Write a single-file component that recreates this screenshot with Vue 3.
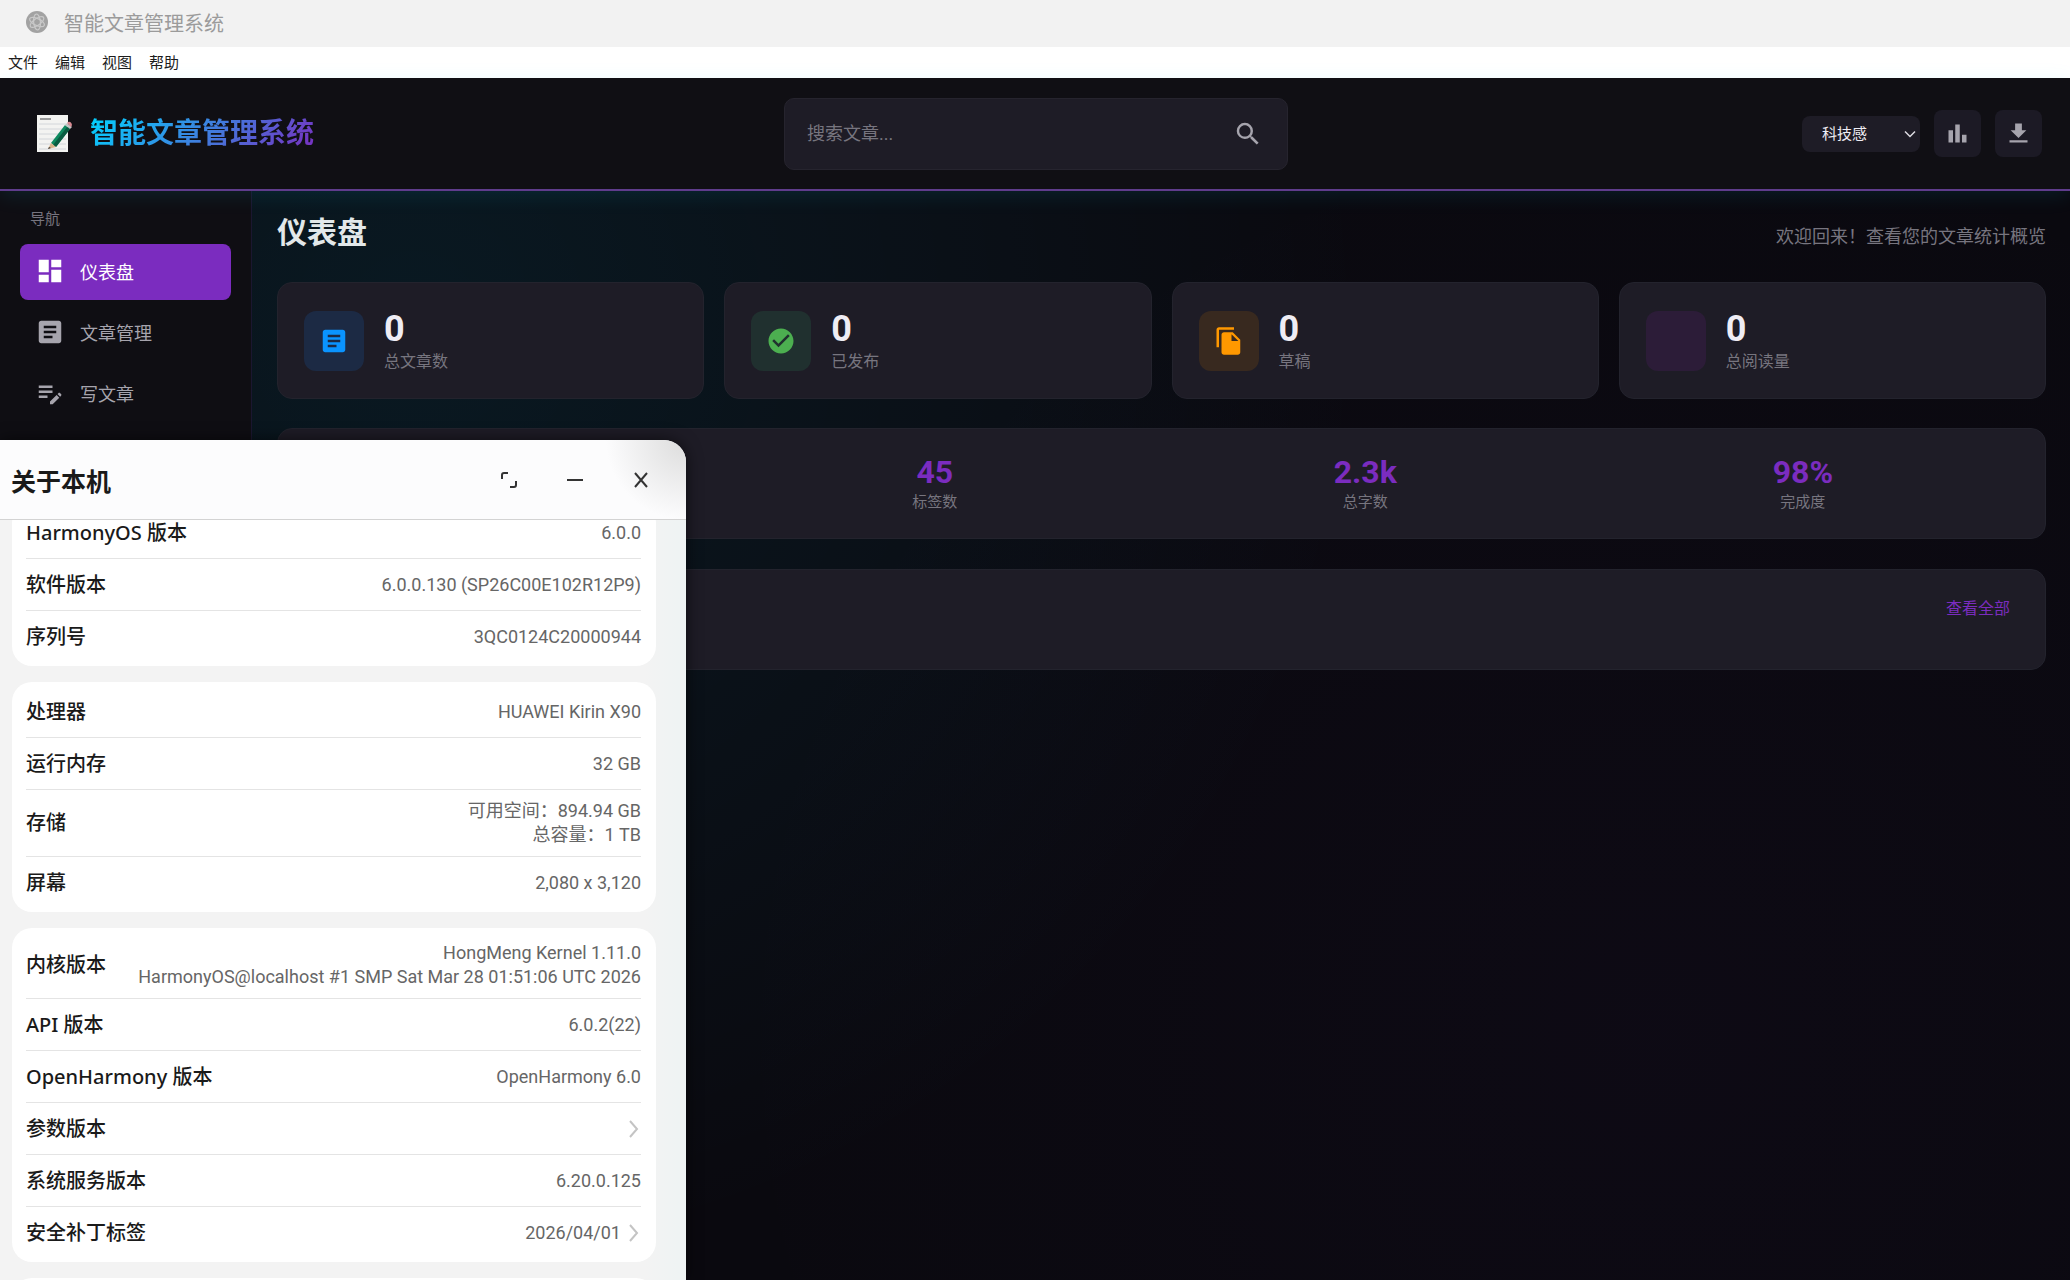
<script setup>
import { ref } from 'vue'

const query = ref('')
const theme = ref('科技感')

const menus = ['文件', '编辑', '视图', '帮助']

const navItems = [
  { label: '仪表盘', icon: 'M3 13h8V3H3v10zm0 8h8v-6H3v6zm10 0h8V11h-8v10zm0-18v6h8V3h-8z', active: true },
  { label: '文章管理', icon: 'M19 3H5c-1.1 0-2 .9-2 2v14c0 1.1.9 2 2 2h14c1.1 0 2-.9 2-2V5c0-1.1-.9-2-2-2zm-5 14H7v-2h7v2zm3-4H7v-2h10v2zm0-4H7V7h10v2z' },
  { label: '写文章', icon: 'M3 10h11v2H3v-2zm0-4h11v2H3V6zm0 8h7v2H3v-2zm15.010-1.130.71-.71c.39-.39 1.020-.39 1.410 0l.71.71c.39.39.39 1.020 0 1.410l-.71.71-2.120-2.120zm-.71.71-5.300 5.300V21h2.120l5.300-5.300-2.120-2.120z' },
]

const cards = [
  { label: '总文章数', tone: 'blue', icon: 'M19 3H5c-1.1 0-2 .9-2 2v14c0 1.1.9 2 2 2h14c1.1 0 2-.9 2-2V5c0-1.1-.9-2-2-2zm-5 14H7v-2h7v2zm3-4H7v-2h10v2zm0-4H7V7h10v2z' },
  { label: '已发布', tone: 'green', icon: 'M12 2C6.48 2 2 6.48 2 12s4.48 10 10 10 10-4.48 10-10S17.52 2 12 2zm-2 15-5-5 1.41-1.41L10 14.17l7.59-7.59L19 8l-9 9z' },
  { label: '草稿', tone: 'orange', icon: 'M16 1H4c-1.1 0-2 .9-2 2v14h2V3h12V1zm-1 4 6 6v10c0 1.1-.9 2-2 2H7.99C6.89 23 6 22.1 6 21l.01-14c0-1.1.89-2 1.99-2h7zm-1 7h5.5L14 6.5V12z' },
  { label: '总阅读量', tone: 'purple', icon: '' },
]

const quickStats = [
  { value: '45', label: '标签数' },
  { value: '2.3k', label: '总字数' },
  { value: '98%', label: '完成度' },
]

const groups = [
  [
    { label: 'HarmonyOS 版本', lines: ['6.0.0'] },
    { label: '软件版本', lines: ['6.0.0.130 (SP26C00E102R12P9)'] },
    { label: '序列号', lines: ['3QC0124C20000944'] },
  ],
  [
    { label: '处理器', lines: ['HUAWEI Kirin X90'] },
    { label: '运行内存', lines: ['32 GB'] },
    { label: '存储', lines: ['可用空间：894.94 GB', '总容量：1 TB'] },
    { label: '屏幕', lines: ['2,080 x 3,120'] },
  ],
  [
    { label: '内核版本', lines: ['HongMeng Kernel 1.11.0', 'HarmonyOS@localhost #1 SMP Sat Mar 28 01:51:06 UTC 2026'] },
    { label: 'API 版本', lines: ['6.0.2(22)'] },
    { label: 'OpenHarmony 版本', lines: ['OpenHarmony 6.0'] },
    { label: '参数版本', lines: [], more: true },
    { label: '系统服务版本', lines: ['6.20.0.125'] },
    { label: '安全补丁标签', lines: ['2026/04/01'], more: true },
  ],
  [],
]
</script>

<template>
  <div class="screen">
    <div class="titlebar">
      <svg class="app-mark" viewBox="0 0 24 24" aria-hidden="true">
        <circle cx="12" cy="12" r="11" fill="#a2a2a2" />
        <g fill="none" stroke="#c9c9c9" stroke-width="1.2">
          <ellipse cx="12" cy="12" rx="8" ry="3.4" transform="rotate(25 12 12)" />
          <ellipse cx="12" cy="12" rx="8" ry="3.4" transform="rotate(85 12 12)" />
          <ellipse cx="12" cy="12" rx="8" ry="3.4" transform="rotate(145 12 12)" />
        </g>
      </svg>
      <span>智能文章管理系统</span>
    </div>

    <nav class="menubar" aria-label="菜单">
      <button v-for="m in menus" :key="m" type="button">{{ m }}</button>
    </nav>

    <div class="app">
      <header class="header">
        <div class="brand">
          <svg class="brand-icon" viewBox="0 0 36 40" aria-hidden="true">
            <rect x="1" y="1" width="31" height="37" fill="#f3f3f1" />
            <path d="M4 5h11" stroke="#9a9a9a" stroke-width="2" />
            <path d="M3 10h27M3 15h27M3 20h27M3 25h27M3 30h27M3 35h27" stroke="#d3d6da" stroke-width="1" />
            <path d="M15 29 29 11l5 4-14 18z" fill="#0f8a5f" />
            <path d="M17 31 31 13l3 2-14 18z" fill="#0a5c41" />
            <path d="m29 11 2-2 5 4-2 2z" fill="#c4c4c4" />
            <path d="m31 9 1-1q3-1 4 3l-1 2z" fill="#d98a92" />
            <path d="m15 29-3 6 8-2z" fill="#d9b48a" />
            <path d="m13 33-1 2 3-1z" fill="#333" />
          </svg>
          <h1>智能文章管理系统</h1>
        </div>

        <form class="search" role="search" @submit.prevent>
          <input v-model="query" type="text" placeholder="搜索文章..." aria-label="搜索文章" />
          <button type="submit" aria-label="搜索">
            <svg viewBox="0 0 24 24"><path d="M15.5 14h-.79l-.28-.27A6.47 6.47 0 0 0 16 9.5 6.5 6.5 0 1 0 9.5 16c1.61 0 3.09-.59 4.23-1.57l.27.28v.79l5 4.99L20.49 19l-4.99-5zm-6 0C7.01 14 5 11.99 5 9.5S7.01 5 9.5 5 14 7.01 14 9.5 11.99 14 9.5 14z" /></svg>
          </button>
        </form>

        <div class="actions">
          <div class="theme">
            <select v-model="theme" aria-label="主题">
              <option>科技感</option>
            </select>
            <svg viewBox="0 0 12 8" aria-hidden="true"><path d="m1 1.500 5 5 5-5" /></svg>
          </div>
          <button class="icon-btn" type="button" aria-label="统计">
            <svg viewBox="0 0 24 24"><path d="M4 9h4v11H4V9zm6-5h4v16h-4V4zm6 9h4v7h-4v-7z" /></svg>
          </button>
          <button class="icon-btn" type="button" aria-label="下载">
            <svg viewBox="0 0 24 24"><path d="M19 9h-4V3H9v6H5l7 7 7-7zM4 18v2h16v-2H4z" /></svg>
          </button>
        </div>
      </header>

      <div class="columns">
        <aside class="sidebar">
          <h2>导航</h2>
          <nav>
            <a v-for="n in navItems" :key="n.label" href="#" :class="{ active: n.active }">
              <svg viewBox="0 0 24 24" aria-hidden="true"><path :d="n.icon" /></svg>
              <span>{{ n.label }}</span>
            </a>
          </nav>
        </aside>

        <main class="main">
          <div class="page-head">
            <h2>仪表盘</h2>
            <p>欢迎回来！查看您的文章统计概览</p>
          </div>

          <section class="cards">
            <article v-for="c in cards" :key="c.label" class="card">
              <div class="card-icon" :class="c.tone">
                <svg v-if="c.icon" viewBox="0 0 24 24" aria-hidden="true"><path :d="c.icon" /></svg>
              </div>
              <div class="card-text">
                <strong>0</strong>
                <span>{{ c.label }}</span>
              </div>
            </article>
          </section>

          <section class="quick">
            <div class="quick-item"></div>
            <div v-for="q in quickStats" :key="q.label" class="quick-item">
              <strong>{{ q.value }}</strong>
              <span>{{ q.label }}</span>
            </div>
          </section>

          <section class="recent">
            <a href="#">查看全部</a>
          </section>
        </main>
      </div>
    </div>

    <section class="about" aria-label="关于本机">
      <header class="about-head">
        <h2>关于本机</h2>
        <div class="window-buttons">
          <button type="button" aria-label="最大化">
            <svg viewBox="0 0 20 20"><path d="M3 9V5q0-2 2-2h4M11 17h4q2 0 2-2v-4" /></svg>
          </button>
          <button type="button" aria-label="最小化">
            <svg viewBox="0 0 20 20"><path d="M2 10h16" /></svg>
          </button>
          <button type="button" aria-label="关闭">
            <svg viewBox="0 0 20 20"><path d="m4 3 12 14M16 3 4 17" /></svg>
          </button>
        </div>
      </header>
      <div class="about-body">
        <dl v-for="(g, i) in groups" :key="i" class="group">
          <div v-for="r in g" :key="r.label" class="row">
            <dt>{{ r.label }}</dt>
            <dd>
              <span class="lines">
                <span v-for="l in r.lines" :key="l">{{ l }}</span>
              </span>
              <svg v-if="r.more" viewBox="0 0 10 20" aria-hidden="true"><path d="m1 2 7 8-7 8" /></svg>
            </dd>
          </div>
        </dl>
      </div>
    </section>
  </div>
</template>

<style>
body {
  background: #0a090f;
}
</style>

<style scoped>
.screen {
  position: relative;
  display: flex;
  flex-direction: column;
  min-height: 100vh;
  overflow: hidden;
  font-family: Roboto, "Noto Sans CJK SC", sans-serif;
}
.screen *,
.screen {
  box-sizing: border-box;
}
h1, h2, p, dl, dd {
  margin: 0;
}
button, input, select {
  font: inherit;
  color: inherit;
  border: 0;
  padding: 0;
  background: none;
}
a {
  text-decoration: none;
}

.titlebar {
  display: flex;
  align-items: center;
  gap: 15px;
  height: 47px;
  padding: 0 25px 3px;
  background: #f2f2f2;
  color: #9b9b9b;
  font-size: 20px;
}
.app-mark {
  width: 24px;
  height: 24px;
}
.menubar {
  display: flex;
  gap: 17px;
  height: 31px;
  padding: 0 8px 2px;
  background: #fff;
  color: #1c1c1c;
  font-size: 15px;
}

.app {
  flex: 1;
  display: flex;
  flex-direction: column;
  background:
    radial-gradient(circle at 20% 20%, rgba(0, 212, 255, 0.08), transparent 50%),
    radial-gradient(circle at 80% 80%, rgba(123, 44, 191, 0.03), transparent 50%),
    #0a090f;
}
.header {
  position: relative;
  display: grid;
  grid-template-columns: 1fr 504px 1fr;
  align-items: center;
  height: 113px;
  padding: 0 28px 0 30px;
  background: #100f14;
  border-bottom: 2px solid #5f3c8c;
  box-shadow: 0 4px 20px rgba(0, 212, 255, 0.1);
}
.brand {
  display: flex;
  align-items: center;
  gap: 18px;
  padding-left: 6px;
}
.brand-icon {
  width: 36px;
  height: 40px;
}
.brand h1 {
  font-size: 28px;
  line-height: 40px;
  color: transparent;
  background: linear-gradient(135deg, #00d4ff, #7b2cbf);
  background-clip: text;
}
.search {
  display: flex;
  align-items: center;
  height: 72px;
  padding: 0 22px;
  background: #1e1c26;
  border: 1px solid #26242e;
  border-radius: 10px;
}
.search input {
  flex: 1;
  min-width: 0;
  height: 40px;
  font-size: 18px;
  outline: none;
  color: #e6e4ec;
}
.search input::placeholder {
  color: #77757f;
}
.search button {
  width: 32px;
  height: 36px;
}
.search svg {
  display: block;
  width: 30px;
  height: 30px;
  fill: #a6a4ad;
}
.actions {
  display: flex;
  align-items: center;
  justify-content: flex-end;
  gap: 14px;
}
.theme {
  position: relative;
}
.theme select {
  width: 118px;
  height: 36px;
  padding: 0 20px;
  appearance: none;
  background: #1e1c26;
  border-radius: 8px;
  color: #efedf4;
  font-size: 15px;
}
.theme svg {
  position: absolute;
  right: 4px;
  top: 14px;
  width: 12px;
  height: 8px;
  fill: none;
  stroke: #dcdae0;
  stroke-width: 1.5;
  pointer-events: none;
}
.icon-btn {
  display: grid;
  place-items: center;
  width: 47px;
  height: 47px;
  background: #1c1a25;
  border-radius: 8px;
}
.icon-btn svg {
  width: 27px;
  height: 27px;
  fill: #a6a4ad;
}

.columns {
  flex: 1;
  display: flex;
}
.sidebar {
  width: 252px;
  padding: 16px 20px;
  background: #0f0e13;
  border-right: 1px solid #1b1730;
}
.sidebar h2 {
  margin-bottom: 13px;
  padding-left: 10px;
  font-size: 15px;
  font-weight: 400;
  line-height: 24px;
  color: #77757f;
}
.sidebar nav {
  display: flex;
  flex-direction: column;
  gap: 5px;
}
.sidebar a {
  display: flex;
  align-items: center;
  gap: 15px;
  height: 56px;
  padding: 0 0 2px 15px;
  border-radius: 8px;
  font-size: 18px;
  color: #a6a4ad;
}
.sidebar a.active {
  background: #7b2cbf;
  color: #fff;
}
.sidebar a svg {
  width: 30px;
  height: 30px;
  fill: currentColor;
}

.main {
  flex: 1;
  min-width: 0;
  padding: 20px 24px 0 25px;
}
.page-head {
  display: flex;
  align-items: center;
  justify-content: space-between;
  height: 44px;
  margin-bottom: 27px;
}
.page-head h2 {
  font-size: 30px;
  line-height: 44px;
  color: #e2e8ea;
}
.page-head p {
  padding-top: 4px;
  font-size: 18px;
  color: #77757f;
}
.cards {
  display: grid;
  grid-template-columns: repeat(4, 1fr);
  gap: 20px;
}
.card,
.quick,
.recent {
  background: #1e1c26;
  border: 1px solid #23232d;
  border-radius: 15px;
}
.card {
  display: flex;
  align-items: center;
  gap: 20px;
  height: 117px;
  padding: 0 26px;
}
.card-icon {
  display: grid;
  place-items: center;
  width: 60px;
  height: 60px;
  border-radius: 12px;
}
.card-icon svg {
  width: 30px;
  height: 30px;
  fill: currentColor;
}
.blue { background: #1c2a44; color: #0a94ff; }
.green { background: #20302f; color: #4caf50; }
.orange { background: #38291f; color: #ff9800; }
.purple { background: #2c1c38; }
.card-text strong,
.card-text span {
  display: block;
}
.card-text strong {
  font-size: 36px;
  line-height: 42px;
  color: #efedf4;
}
.card-text span {
  font-size: 16px;
  line-height: 24px;
  color: #77757f;
}
.quick {
  display: flex;
  align-items: center;
  justify-content: space-around;
  height: 111px;
  margin-top: 29px;
  padding: 0 24px;
}
.quick-item {
  min-width: 46px;
  text-align: center;
}
.quick-item strong,
.quick-item span {
  display: block;
}
.quick-item strong {
  font-size: 32px;
  line-height: 36px;
  color: #7b2cbf;
}
.quick-item span {
  font-size: 15px;
  line-height: 24px;
  color: #77757f;
}
.recent {
  display: flex;
  justify-content: flex-end;
  height: 101px;
  margin-top: 30px;
  padding: 27px 35px;
}
.recent a {
  font-size: 16px;
  line-height: 24px;
  color: #7b2cbf;
}

.about {
  position: absolute;
  top: 440px;
  bottom: 0;
  left: 0;
  display: flex;
  flex-direction: column;
  width: 686px;
  overflow: hidden;
  background: linear-gradient(90deg, #f3f3f3 94%, #eef3f3);
  border-top-right-radius: 22px;
  box-shadow: 0 0 16px rgba(0, 0, 0, 0.6);
}
.about-head {
  display: flex;
  flex: none;
  align-items: center;
  justify-content: space-between;
  height: 80px;
  padding: 0 35px 0 11px;
  background: radial-gradient(circle at 100% 0, #dcdcdc, #fcfcfd 80px);
  border-bottom: 1px solid #d3d3d3;
}
.about-head h2 {
  font-size: 25px;
  color: #1a1a1a;
}
.window-buttons {
  display: flex;
  gap: 46px;
}
.window-buttons svg {
  display: block;
  width: 20px;
  height: 20px;
  fill: none;
  stroke: #333;
  stroke-width: 2;
}
.about-body {
  display: flex;
  flex: 1;
  flex-direction: column;
  gap: 16px;
  min-height: 0;
  padding: 0 30px 0 12px;
  overflow: hidden;
}
.group {
  flex: none;
  min-height: 40px;
  padding: 4px 15px 4px 14px;
  background: #fff;
  border-radius: 20px;
}
.group:first-child {
  margin-top: -17px;
}
.row {
  display: flex;
  align-items: center;
  justify-content: space-between;
  min-height: 52px;
  padding: 9px 0;
  border-bottom: 1px solid #e4e4e4;
}
.row:last-child {
  min-height: 51px;
  border-bottom: 0;
}
.row dt {
  font-family: "Noto Sans", "Noto Sans CJK SC", sans-serif;
  font-size: 20px;
  font-weight: 500;
  line-height: 24px;
  color: #1a1a1a;
}
.row dd {
  display: flex;
  align-items: center;
  gap: 8px;
  font-size: 18px;
  line-height: 24px;
  color: #666;
}
.lines span {
  display: block;
  text-align: right;
}
.row dd svg {
  width: 10px;
  height: 20px;
  margin-right: 2px;
  fill: none;
  stroke: #c4c4c4;
  stroke-width: 2;
}
</style>
